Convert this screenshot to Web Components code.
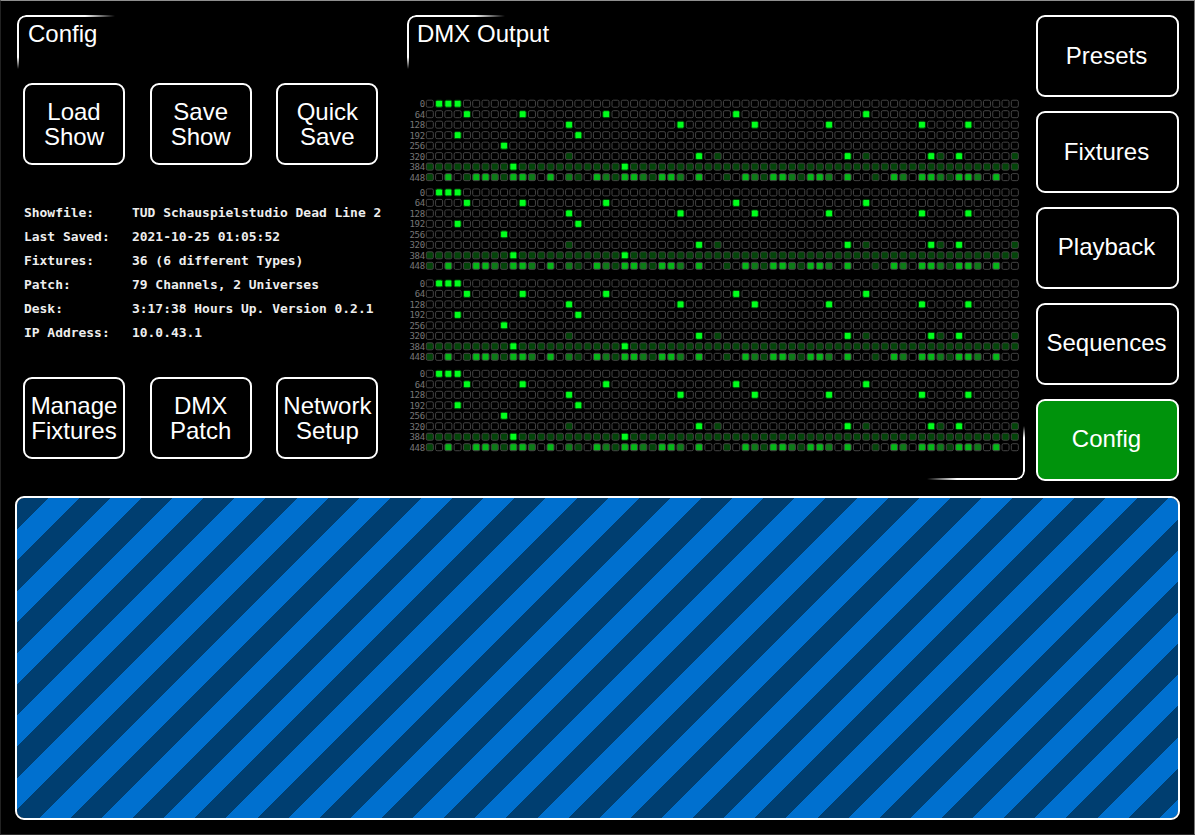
<!DOCTYPE html>
<html lang="en">
<head>
<meta charset="utf-8">
<title>Config</title>
<style>
html,body{margin:0;height:100%;background:#000;overflow:hidden}
body{font-family:"Liberation Sans",Arial,sans-serif;color:#fff}
</style>
</head>
<body>
<desk-app></desk-app>
<script>
const define = (name, html, setup) => customElements.define(name, class extends HTMLElement {
  constructor() {
    super();
    this.attachShadow({mode: 'open'}).innerHTML = html;
  }
  connectedCallback() { if (setup) setup(this, this.shadowRoot); }
});

define('desk-button', `<style>
:host{display:flex;box-sizing:border-box;width:102px;height:82px;border:2px solid #fff;border-radius:9px;
align-items:center;justify-content:center;text-align:center;font-size:24px;line-height:25px;padding-bottom:1px}
:host([wide]){width:143px;padding:0 2px 1px 0}
:host([raised]){padding-bottom:4px}
:host([active]){background:#00930c}
</style><span><slot></slot></span>`);

define('desk-panel', `<style>
:host{display:flex;flex-direction:column;position:relative;box-sizing:border-box}
h2{box-sizing:border-box;margin:0;font-weight:400;font-size:24px;line-height:28px;padding:5px 0 0 var(--title-x,11px);height:62px;white-space:nowrap}
i{position:absolute;box-sizing:border-box;width:100px;height:54px;pointer-events:none;mask-composite:intersect}
.a{left:0;top:0;border:solid #fff;border-width:2px 0 0 2px;border-top-left-radius:9px;
mask-image:linear-gradient(to right,#000 68%,transparent 98%),linear-gradient(#000 78%,transparent)}
.b{display:none;right:0;bottom:1px;border:solid #fff;border-width:0 2px 2px 0;border-bottom-right-radius:9px;
mask-image:linear-gradient(to left,#000 68%,transparent 98%),linear-gradient(to top,#000 78%,transparent)}
:host([framed]) .b{display:block}
</style><i class="a"></i><i class="b"></i><h2><slot name="title"></slot></h2><slot></slot>`);

define('button-row', `<style>:host{display:grid;grid-template-columns:repeat(3,102px);column-gap:24.7px}</style><slot></slot>`);

define('info-line', `<style>
:host{display:grid;grid-template-columns:108px 1fr;height:24px;
font:bold 12.95px/24px "DejaVu Sans Mono","Liberation Mono",monospace;color:#eee;white-space:pre}
</style><span><slot name="key"></slot></span><span><slot></slot></span>`);

define('dmx-universe', `<style>
:host{display:block}svg{display:block;overflow:visible}
text{font:9px "DejaVu Sans Mono","Liberation Mono",monospace;fill:#777}
rect{stroke:#444;stroke-width:1;fill:#000}
.d{fill:#034509}.m{fill:#0d7a17}.b{fill:#05b817}.f{fill:#00ff1c;stroke:#063d0a}
</style><svg width="614" height="84"></svg>`, (el, root) => {
  const full = {0:[1,2,3],1:[4,10,19,33,47],2:[15,27,35,43,53,58],3:[3,16],4:[8],5:[29,45,54,57],6:[9,21]};
  const dim = [15,31,47,55,63];
  const last = 'd.b.dbbmdbbm.b.md.bmdbbmdbbm.b..d.bmdbbmdbbm.b..d.bm.bbmdbbm.b..';
  const dy = +el.getAttribute('offset') || 0;
  let out = '';
  for (let r = 0; r < 8; r++) {
    const y = 5.3 + dy + r * 10.49;
    out += `<text x="15.2" y="${(y + 3.4).toFixed(2)}" text-anchor="end" textLength="${String(r*64).length*5.25}">${r * 64}</text>`;
    for (let c = 0; c < 64; c++) {
      let k = r === 7 ? last[c] : r === 6 ? 'd' : r === 5 && dim.includes(c) ? 'd' : '.';
      if (full[r] && full[r].includes(c)) k = 'f';
      const x = 19.8 + c * 9.286;
      out += `<rect x="${(x - 3.5).toFixed(2)}" y="${(y - 3.5).toFixed(2)}" width="7" height="7" rx="1.5" class="${k === '.' ? '' : k}"/>`;
    }
  }
  root.querySelector('svg').innerHTML = out;
});

define('striped-area', `<style>
:host{display:block;box-sizing:border-box;border:2px solid #fff;border-radius:9px;
background:repeating-linear-gradient(135deg,#003e70 0 22px,#0070cf 22px 44px) padding-box}
</style>`);

define('desk-app', `<style>
:host{display:grid;box-sizing:border-box;width:1195px;height:835px;border:1px solid;border-color:#8e8e8e #777 #2b2b2b #222;
grid-template-rows:465px 324px;row-gap:16px;padding:14px 14px 15px;color:#fff}
.top{display:grid;grid-template-columns:391px 619px 154px}
.top>nav{margin-left:11px;display:flex;flex-direction:column;gap:14px}
.cfg{margin-left:2px}
.cfg button-row{margin:6px 0 0 6px}
.info{margin:36px 0 0 7px;height:144px}
.cfg .second{margin-top:32px}
.dmx{margin-left:1px;--title-x:10px}
.grid{display:grid;grid-template-rows:89px 91px 90px 84px;margin:21px 0 0 3px}
</style>
<div class="top">
<desk-panel class="cfg"><span slot="title">Config</span>
<button-row><desk-button>Load<br>Show</desk-button><desk-button>Save<br>Show</desk-button><desk-button>Quick<br>Save</desk-button></button-row>
<div class="info">
<info-line><span slot="key">Showfile:</span>TUD Schauspielstudio Dead Line 2</info-line>
<info-line><span slot="key">Last Saved:</span>2021-10-25 01:05:52</info-line>
<info-line><span slot="key">Fixtures:</span>36 (6 different Types)</info-line>
<info-line><span slot="key">Patch:</span>79 Channels, 2 Universes</info-line>
<info-line><span slot="key">Desk:</span>3:17:38 Hours Up. Version 0.2.1</info-line>
<info-line><span slot="key">IP Address:</span>10.0.43.1</info-line>
</div>
<button-row class="second"><desk-button>Manage<br>Fixtures</desk-button><desk-button>DMX<br>Patch</desk-button><desk-button>Network<br>Setup</desk-button></button-row>
</desk-panel>
<desk-panel class="dmx" framed><span slot="title">DMX Output</span>
<div class="grid"><dmx-universe offset="0.4"></dmx-universe><dmx-universe offset="0.1"></dmx-universe><dmx-universe offset="0.1"></dmx-universe><dmx-universe offset="0.5"></dmx-universe></div>
</desk-panel>
<nav><desk-button wide>Presets</desk-button><desk-button wide>Fixtures</desk-button><desk-button wide raised>Playback</desk-button><desk-button wide raised>Sequences</desk-button><desk-button wide raised active>Config</desk-button></nav>
</div>
<striped-area></striped-area>`);
</script>
</body>
</html>
